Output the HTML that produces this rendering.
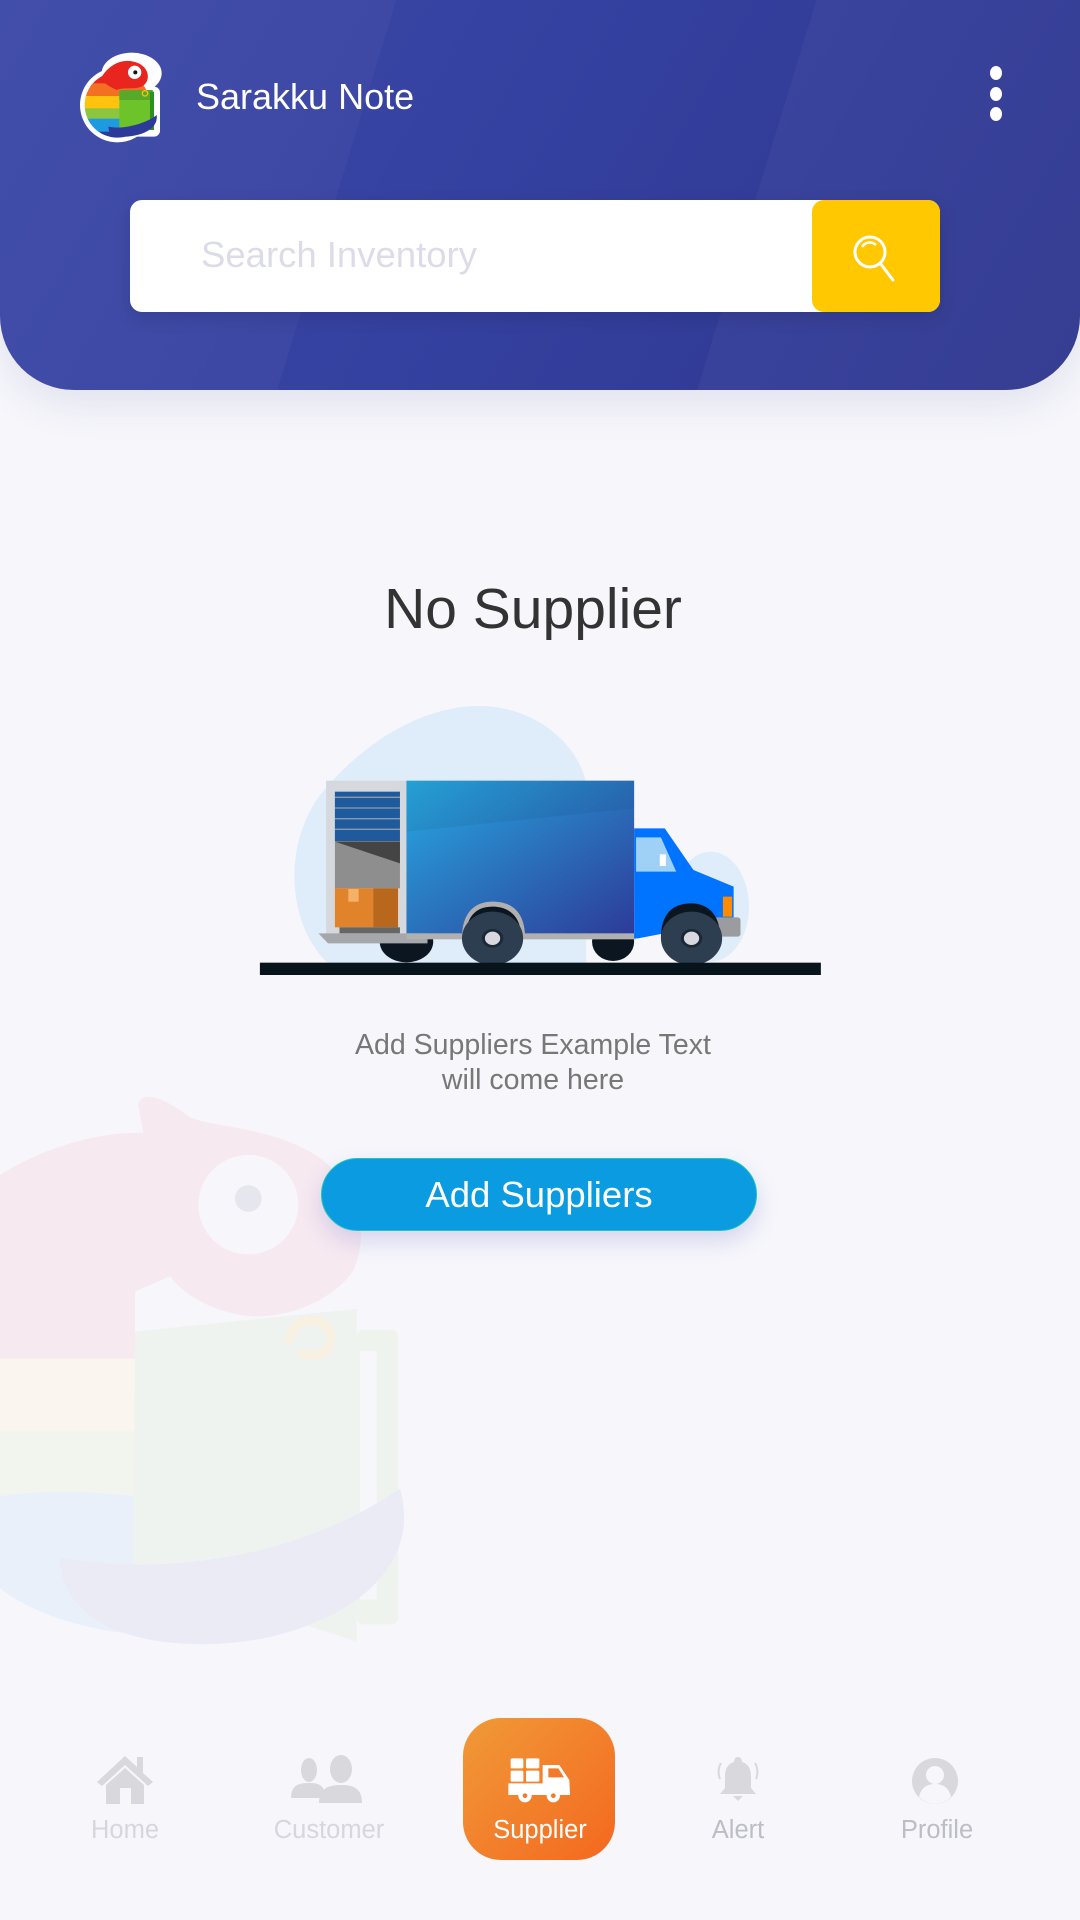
<!DOCTYPE html>
<html><head><meta charset="utf-8">
<style>
*{margin:0;padding:0;box-sizing:border-box}
html,body{width:1080px;height:1920px;overflow:hidden;background:#f6f6fb;font-family:"Liberation Sans",sans-serif}
.abs{position:absolute}
.header{left:0;top:0;width:1080px;height:390px;border-radius:0 0 74px 74px;overflow:hidden;background:linear-gradient(120deg,#3c4aa8 0%,#3541a0 45%,#2e378f 100%);box-shadow:0 14px 40px rgba(60,60,140,0.10)}
.title{left:196px;top:76px;color:#fff;font-size:36px}
.dot{width:12px;height:14px;border-radius:50%;background:#fff;left:990px}
.search{left:130px;top:200px;width:810px;height:112px;background:#fff;border-radius:12px;box-shadow:0 6px 18px rgba(0,0,0,0.12)}
.sbtn{left:812px;top:200px;width:128px;height:112px;background:#ffc800;border-radius:12px}
.ph{left:201px;top:234px;font-size:36.5px;color:#dcdce8}
.h1{left:0;width:1066px;top:576px;text-align:center;font-size:57px;color:#333}
.desc{left:0;width:1066px;top:1028px;text-align:center;font-size:28.5px;color:#777;line-height:35px}
.btn{left:321px;top:1158px;width:436px;height:73px;border-radius:37px;background:#0a9be0;border:1px solid #1ec6b8;color:#fff;font-size:36.5px;text-align:center;line-height:71px;box-shadow:0 10px 22px rgba(100,100,200,0.22)}
.nav{top:1816px;font-size:25.5px;color:#d6d6dc;text-align:center;width:180px}
.tile{left:463px;top:1718px;width:152px;height:142px;border-radius:38px;background:linear-gradient(135deg,#f09a38,#f4681f)}
</style></head><body>

<svg class="abs" style="left:0;top:1060px" width="450" height="600" viewBox="0 0 1350 1568" preserveAspectRatio="none">
<rect x="0" y="780" width="405" height="190" fill="#faf6ef"/>
<rect x="0" y="970" width="405" height="170" fill="#f1f5ee"/>
<path d="M0,1140 C150,1120 300,1130 405,1140 L405,1500 C250,1490 80,1440 0,1380Z" fill="#eaf0fa"/>
<path d="M0,300 C150,220 300,190 430,190 L415,120 C420,80 480,90 570,150 C650,180 800,170 950,250 C1080,330 1110,450 1060,550 C980,650 800,690 690,660 C600,640 540,600 510,565 L405,605 L405,780 L0,780Z" fill="#f6e9f0"/>
<ellipse cx="745" cy="378" rx="150" ry="130" fill="#f7f7fb"/>
<ellipse cx="745" cy="362" rx="40" ry="35" fill="#e6e6ee"/>
<rect x="1070" y="705" width="125" height="770" rx="20" fill="#eef3ee"/>
<rect x="1080" y="760" width="50" height="650" fill="#f6f6fb"/>
<path d="M405,710 L1070,650 L1070,1520 L400,1330Z" fill="#eff3ef"/>
<path d="M870,740 C860,680 960,660 990,710 C1010,760 940,790 900,760" fill="none" stroke="#f8f0e0" stroke-width="25"/>
<path d="M180,1300 C500,1350 900,1300 1200,1120 C1260,1300 1100,1450 800,1510 C500,1560 180,1500 180,1300Z" fill="#ebebf5"/>
</svg>

<div class="abs header">
  <div class="abs" style="left:-100px;top:-50px;width:420px;height:600px;background:rgba(255,255,255,0.03);transform:skewX(-17deg)"></div>
  <div class="abs" style="left:740px;top:-50px;width:600px;height:600px;background:rgba(255,255,255,0.035);transform:skewX(-17deg)"></div>
</div>

<svg class="abs" style="left:60px;top:40px" width="120" height="120" viewBox="0 0 360 360">
<defs><clipPath id="lc"><circle cx="172" cy="195" r="98"/></clipPath></defs>
<circle cx="172" cy="195" r="112" fill="#fff"/>
<ellipse cx="215" cy="100" rx="90" ry="62" fill="#fff"/>
<rect x="160" y="140" width="140" height="150" rx="18" fill="#fff"/>
<g clip-path="url(#lc)">
<rect x="60" y="90" width="240" height="50" fill="#e8251f"/>
<rect x="60" y="130" width="240" height="40" fill="#f36f21"/>
<rect x="60" y="168" width="240" height="38" fill="#ffc20e"/>
<rect x="60" y="205" width="240" height="32" fill="#8cc63f"/>
<rect x="60" y="236" width="240" height="40" fill="#1e9be0"/>
<rect x="60" y="275" width="240" height="40" fill="#2d3a9a"/>
</g>
<path d="M120,120 C140,80 180,55 220,65 C270,75 275,125 245,140 C220,150 190,140 170,150 L150,140Z" fill="#e8251f"/>
<circle cx="224" cy="97" r="20" fill="#fff"/><circle cx="226" cy="97" r="6" fill="#111"/>
<rect x="178" y="150" width="100" height="120" fill="#6cc42a"/>
<rect x="178" y="150" width="100" height="30" fill="#58a82a"/>
<rect x="270" y="155" width="12" height="115" fill="#2e8f25"/>
<circle cx="255" cy="160" r="8" fill="none" stroke="#ffc20e" stroke-width="4"/>
<path d="M145,260 C190,270 260,250 290,225 C295,260 260,285 200,290 L150,290Z" fill="#2d3a9a"/>
</svg>

<div class="abs title">Sarakku Note</div>
<div class="abs dot" style="top:66px"></div>
<div class="abs dot" style="top:87px"></div>
<div class="abs dot" style="top:107px"></div>

<div class="abs search"></div>
<div class="abs sbtn"></div>
<svg class="abs" style="left:846px;top:230px" width="60" height="55" viewBox="0 0 60 55">
<circle cx="24" cy="22" r="15" fill="none" stroke="#fff" stroke-width="3"/>
<path d="M16,17 A9,9 0 0 1 30,15" fill="none" stroke="#fff" stroke-width="2.5"/>
<path d="M34,33 L47,50" stroke="#fff" stroke-width="3" stroke-linecap="round"/>
</svg>
<div class="abs ph">Search Inventory</div>

<div class="abs h1">No Supplier</div>

<svg class="abs" style="left:240px;top:690px" width="600" height="290" viewBox="0 0 1568 870" preserveAspectRatio="none">
<defs><linearGradient id="bg" x1="0" y1="0" x2="1" y2="1"><stop offset="0" stop-color="#27a9e1"/><stop offset="1" stop-color="#2d3b98"/></linearGradient></defs>
<path d="M230,820 C120,700 110,450 220,300 C330,150 480,50 620,48 C760,45 880,150 905,280 L905,820Z" fill="#dfedfa"/>
<ellipse cx="1230" cy="650" rx="100" ry="165" fill="#dfedfa"/>
<ellipse cx="435" cy="755" rx="70" ry="62" fill="#0b1620"/>
<ellipse cx="975" cy="755" rx="55" ry="58" fill="#0b1620"/>
<rect x="225" y="272" width="212" height="463" fill="#d5d9de"/>
<rect x="248" y="305" width="170" height="148" fill="#1e5a9c"/>
<g stroke="#8a9ab0" stroke-width="4"><line x1="248" y1="322" x2="418" y2="322"/><line x1="248" y1="354" x2="418" y2="354"/><line x1="248" y1="386" x2="418" y2="386"/><line x1="248" y1="418" x2="418" y2="418"/></g>
<rect x="248" y="453" width="170" height="142" fill="#8e8e8e"/>
<polygon points="248,455 418,455 418,520" fill="#444"/>
<rect x="248" y="595" width="100" height="117" fill="#e0832a"/>
<rect x="348" y="595" width="65" height="117" fill="#b8671c"/>
<rect x="283" y="597" width="27" height="38" fill="#f5b266"/>
<rect x="260" y="712" width="158" height="18" fill="#666"/>
<rect x="435" y="272" width="595" height="463" fill="url(#bg)"/>
<polygon points="435,272 1030,272 1030,355 435,425" fill="#000" opacity="0.05"/>
<polygon points="205,730 490,730 490,760 230,760" fill="#a5a7aa"/>
<rect x="435" y="730" width="600" height="18" fill="#b0b0b0"/>
<path d="M1030,415 L1110,415 L1185,540 L1290,590 L1290,690 L1040,745 L1030,745Z" fill="#0073ff"/>
<polygon points="1035,442 1100,442 1140,545 1035,545" fill="#9fd0f5"/>
<rect x="1097" y="493" width="16" height="35" fill="#fff"/>
<rect x="1262" y="620" width="24" height="60" fill="#ff8c00"/>
<rect x="1240" y="682" width="68" height="58" rx="8" fill="#9a9ca0"/>
<path d="M580,745 C580,660 620,635 660,635 C710,635 745,665 745,745Z" fill="#b0b0b0"/>
<path d="M590,745 C590,670 625,650 660,650 C700,650 735,675 735,745Z" fill="#0b1620"/>
<path d="M1100,745 C1100,660 1140,640 1180,640 C1220,640 1255,670 1255,745Z" fill="#0b1620"/>
<circle cx="660" cy="745" r="80" fill="#2d3e50"/><circle cx="660" cy="745" r="28" fill="#1b2835"/><circle cx="660" cy="745" r="20" fill="#d8d8e0"/>
<circle cx="1180" cy="745" r="80" fill="#2d3e50"/><circle cx="1180" cy="745" r="28" fill="#1b2835"/><circle cx="1180" cy="745" r="20" fill="#d8d8e0"/>
<rect x="52" y="818" width="1466" height="37" fill="#08141c"/>
</svg>

<div class="abs desc">Add Suppliers Example Text<br>will come here</div>
<div class="abs btn">Add Suppliers</div>

<svg class="abs" style="left:95px;top:1752px" width="60" height="52" viewBox="0 0 60 52">
<path d="M30,4 L2,30 L7,34 L30,13 L53,34 L58,30 L48,21 L48,5 L42,5 L42,15Z" fill="#d8d8dd"/>
<path d="M11,33 L30,16 L49,33 L49,52 L36,52 L36,36 L25,36 L25,52 L11,52Z" fill="#d8d8dd"/>
</svg>
<svg class="abs" style="left:289px;top:1755px" width="80" height="50" viewBox="0 0 80 50">
<ellipse cx="20" cy="15" rx="8" ry="12" fill="#d8d8dd"/><path d="M2,43 C2,30 10,28 20,28 C30,28 36,30 36,43Z" fill="#d8d8dd"/>
<ellipse cx="52" cy="14" rx="11" ry="14" fill="#d8d8dd"/><path d="M30,48 C30,33 40,30 52,30 C64,30 73,33 73,48Z" fill="#d8d8dd"/>
</svg>
<div class="abs tile"></div>
<svg class="abs" style="left:480px;top:1730px" width="120" height="90" viewBox="0 0 360 270">
<g fill="#fff"><rect x="92" y="85" width="38" height="30" rx="4"/><rect x="138" y="85" width="40" height="30" rx="4"/><rect x="92" y="122" width="38" height="33" rx="4"/><rect x="138" y="122" width="40" height="33" rx="4"/>
<path d="M188,105 L238,105 L268,150 L270,195 L85,195 L85,160 L188,160Z"/>
<circle cx="135" cy="197" r="20"/><circle cx="220" cy="197" r="20"/></g>
<polygon points="205,115 235,115 252,142 205,142" fill="#f27a2a"/>
<circle cx="135" cy="197" r="7" fill="#f27a2a"/><circle cx="220" cy="197" r="7" fill="#f27a2a"/>
</svg>
<svg class="abs" style="left:716px;top:1755px" width="44" height="50" viewBox="0 0 44 50">
<path d="M22,2 C25,2 26,5 26,7 C33,9 35,15 35,22 L35,33 L40,39 L4,39 L9,33 L9,22 C9,15 11,9 18,7 C18,5 19,2 22,2Z" fill="#d8d8dd"/>
<path d="M17,41 L27,41 L22,46Z" fill="#d8d8dd"/>
<path d="M5,8 C2,13 2,20 4,24 M39,8 C42,13 42,20 40,24" stroke="#d8d8dd" stroke-width="2" fill="none"/>
</svg>
<svg class="abs" style="left:910px;top:1756px" width="50" height="50" viewBox="0 0 50 50">
<circle cx="25" cy="25" r="23" fill="#d8d8dd"/>
<circle cx="25" cy="19" r="9" fill="#f6f6fb"/>
<path d="M9,41 C11,31 18,28 25,28 C32,28 39,31 41,41 C36,46 30,48 25,48 C20,48 14,46 9,41Z" fill="#f6f6fb"/>
</svg>
<div class="abs nav" style="left:35px">Home</div>
<div class="abs nav" style="left:239px">Customer</div>
<div class="abs nav" style="left:450px;color:#fff">Supplier</div>
<div class="abs nav" style="left:648px;color:#bdbdc4">Alert</div>
<div class="abs nav" style="left:847px;color:#bdbdc4">Profile</div>
</body></html>
